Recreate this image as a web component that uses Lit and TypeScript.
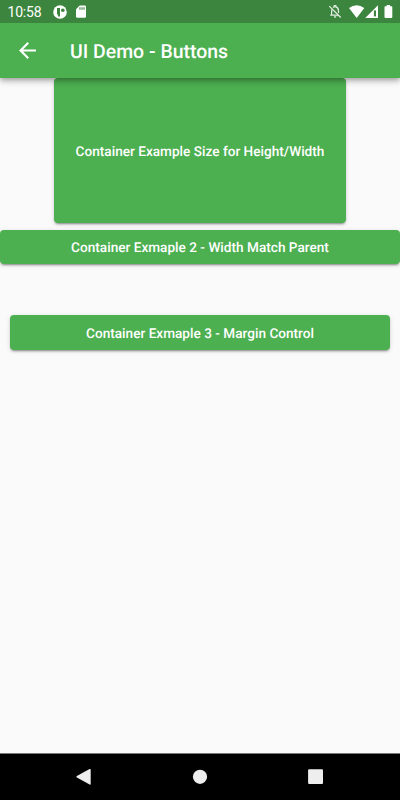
import { LitElement, html, css } from "lit";
import { customElement, property } from "lit/decorators.js";

@customElement("status-bar")
class StatusBar extends LitElement {
  static styles = css`
    :host { display: flex; height: 23px; background: #3b853e; color: #fff; position: relative; z-index: 3; }
    .time { font-size: 14px; line-height: 24px; letter-spacing: -.2px; margin-left: 7.5px; width: 45.5px; white-space: nowrap; }
    svg { display: block; flex: none; fill: #fff; }
    .spacer { flex: 1; }
  `;
  render() {
    return html`
      <span class="time">10:58</span>
      <svg width="34" height="23" viewBox="53 0 34 23">
        <circle cx="60" cy="12" r="6.8" />
        <path d="M57 8h3v8.5h-2v-2h-1z" fill="#3b853e" />
        <circle cx="62.8" cy="10.2" r="1.8" fill="#3b853e" />
        <path d="M79.7 5.5h5.1q1.2 0 1.2 1.2v9.9q0 1.2-1.2 1.2h-7.6q-1.2 0-1.2-1.2V9.2z" />
        <path d="M79.4 7.3h1.1v2.4h-1.1zM81.5 7.3h1.1v2.4h-1.1zM83.5 7.3h1.1v2.4h-1.1z" fill="#3b853e" />
      </svg>
      <span class="spacer"></span>
      <svg width="72" height="23" viewBox="328 0 72 23">
        <g stroke="#e3eee3" stroke-width="1.25" fill="none">
          <path d="M329.3 6.1l11.4 11.4" />
          <path d="M332.1 9.4q-.5 1-.5 2.3v3.5h6.6M330.2 15.2h2M333.1 7.6q.7-.6 1.2-.7V5.6h1.5v1.3q2.7.7 2.7 4.2v2" />
        </g>
        <path d="M333.8 16.3h2.6q-.2 1.5-1.3 1.5t-1.3-1.5z" fill="#e3eee3" />
        <path d="M349 8Q356.7 2.3 364.3 8L356.7 18z" />
        <path d="M378 5.2V18h-12.8z" />
        <path d="M373.9 10.4h2.1v6h-2.1z" fill="#3b853e" />
        <path d="M386.7 5h3.4v1.2h1.3q.9 0 .9.9v9.9q0 .9-.9.9h-6q-.9 0-.9-.9V7.1q0-.9.9-.9h1.3z" />
      </svg>
    `;
  }
}

@customElement("app-header")
class AppHeader extends LitElement {
  @property() heading = "";
  static styles = css`
    :host {
      display: flex; align-items: center; height: 55px; box-sizing: border-box; padding-left: 18px;
      background: #4caf50; color: #fff; position: relative; z-index: 2;
      box-shadow: 0 2px 4px -1px rgba(0,0,0,.2), 0 4px 5px rgba(0,0,0,.14), 0 1px 10px rgba(0,0,0,.12);
    }
    svg { display: block; flex: none; }
    .title { margin: 2px 0 0 33px; font-size: 19.45px; font-weight: 500; line-height: 24px; letter-spacing: 0; text-rendering: geometricPrecision; white-space: nowrap; }
  `;
  render() {
    return html`
      <svg width="19" height="19" viewBox="3 3 18 18"><path fill="#fff" d="M20 11H7.83l5.59-5.59L12 4l-8 8 8 8 1.41-1.41L7.83 13H20z" /></svg>
      <span class="title">${this.heading}</span>
    `;
  }
}

@customElement("raised-button")
class RaisedButton extends LitElement {
  static styles = css`
    :host {
      display: flex; align-items: center; justify-content: center; box-sizing: border-box; height: 34.5px; padding-top: 2px;
      border-radius: 4px; background: #4caf50; color: #fff;
      font-size: 13.6px; font-weight: 500; line-height: 16px; letter-spacing: .01px; text-rendering: geometricPrecision; white-space: nowrap;
      box-shadow: 0 3px 1px -2px rgba(0,0,0,.2), 0 2px 2px rgba(0,0,0,.14), 0 1px 5px rgba(0,0,0,.12);
    }
  `;
  render() {
    return html`<slot></slot>`;
  }
}

@customElement("nav-bar")
class NavBar extends LitElement {
  static styles = css`
    :host { display: flex; align-items: center; justify-content: space-between; height: 47px; box-sizing: border-box; padding: 0 76px; border-top: 1px solid #777; background: #000; }
    svg { display: block; fill: #eee; }
  `;
  render() {
    return html`
      <svg width="16" height="18" viewBox="0 0 16 18"><path d="M13.6 1.1Q14.7.5 14.7 1.7v14.2q0 1.2-1.1.6L.9 9.5q-1-.7 0-1.4z" /></svg>
      <svg width="16" height="16" viewBox="0 0 16 16"><circle cx="8" cy="7.8" r="7.1" /></svg>
      <svg width="16" height="16" viewBox="0 0 16 16"><rect x=".1" y=".2" width="14.9" height="14.9" rx="1" /></svg>
    `;
  }
}

@customElement("app-root")
class AppRoot extends LitElement {
  static styles = css`
    :host { display: flex; flex-direction: column; width: 400px; height: 800px; overflow: hidden; background: #fafafa; font-family: Roboto, sans-serif; }
    main { flex: 1; display: flex; flex-direction: column; min-height: 0; }
    .sized { width: 292px; height: 145.3px; align-self: center; }
    .wide { margin-top: 6.3px; }
    .inset { margin: 51px 9.7px 0; padding-top: 3px; }
  `;
  render() {
    return html`
      <status-bar></status-bar>
      <app-header heading="UI Demo - Buttons"></app-header>
      <main>
        <raised-button class="sized">Container Example Size for Height/Width</raised-button>
        <raised-button class="wide">Container Exmaple 2 - Width Match Parent</raised-button>
        <raised-button class="inset">Container Exmaple 3 - Margin Control</raised-button>
      </main>
      <nav-bar></nav-bar>
    `;
  }
}
